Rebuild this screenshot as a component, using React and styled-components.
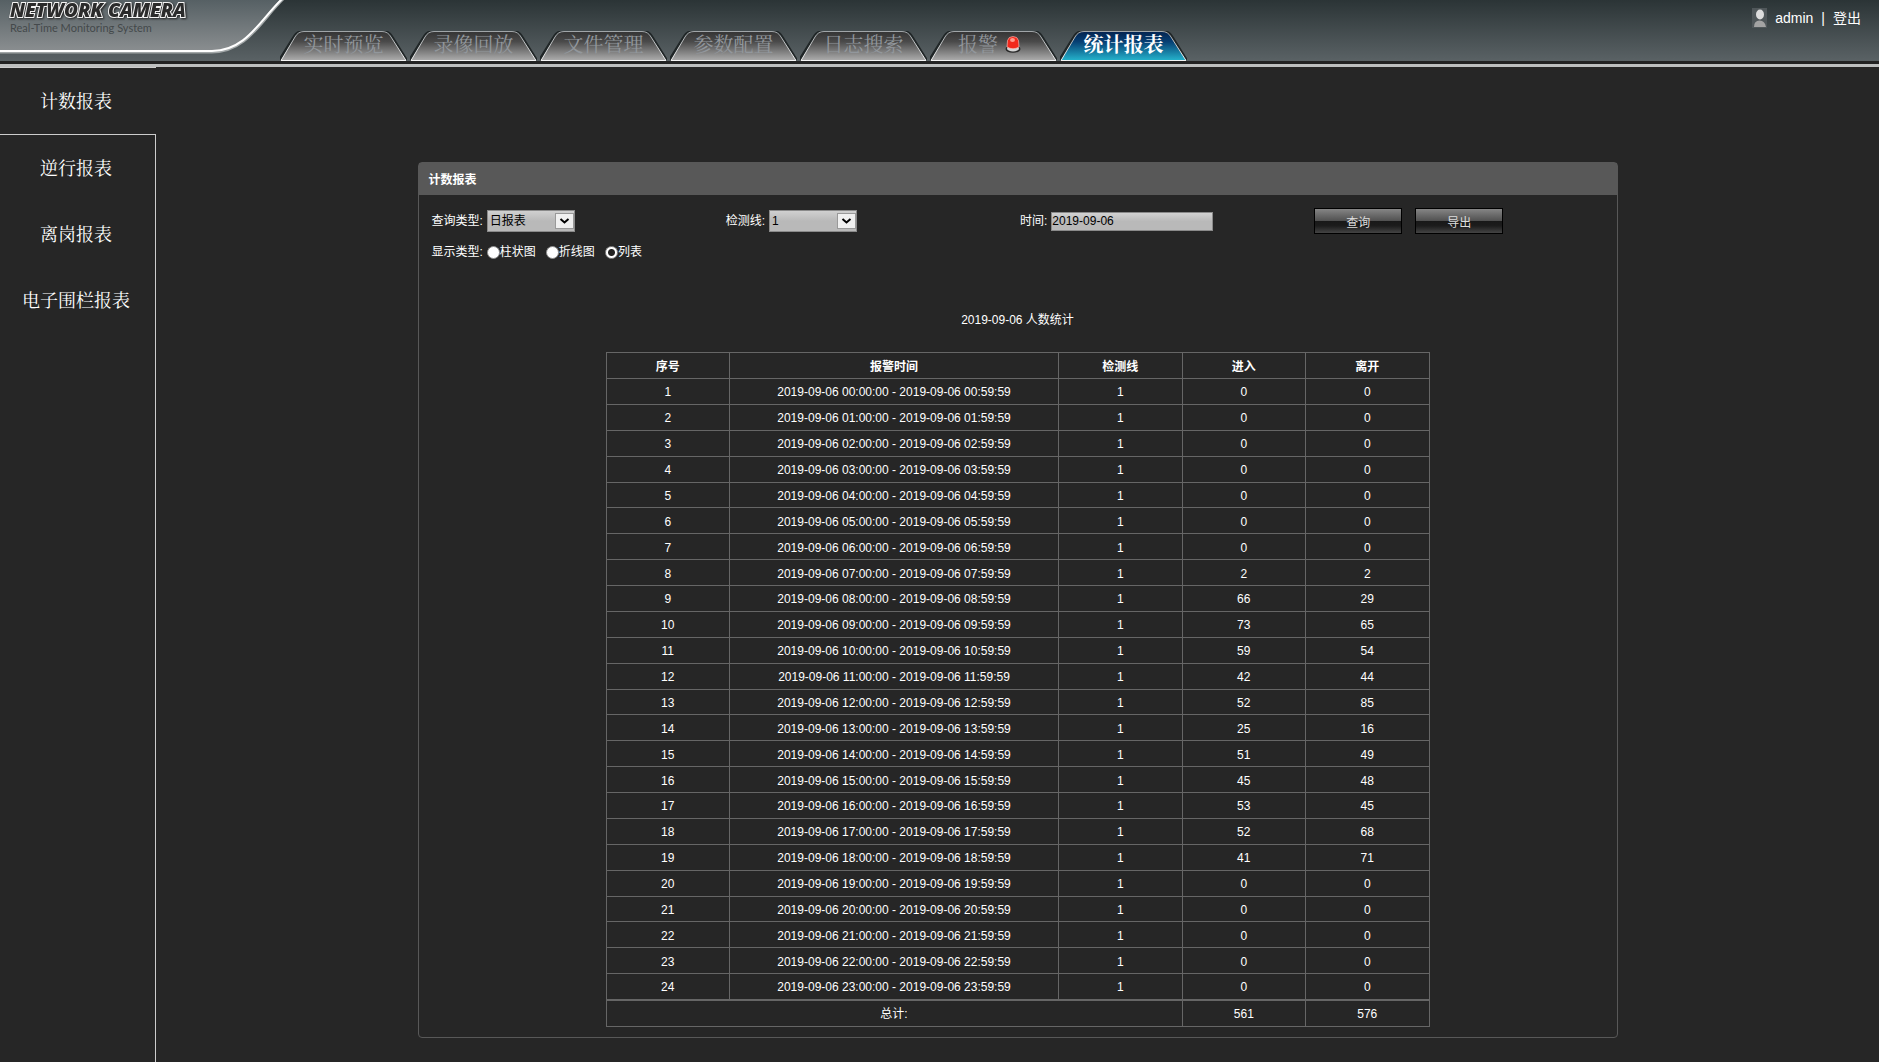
import React, { useState } from "react";
import styled, { createGlobalStyle, css } from "styled-components";

const GlobalStyle = createGlobalStyle`
  * { box-sizing: border-box; }
  body {
    margin: 0;
    background: #262626;
    color: #fff;
    font: 12px/16px "Liberation Sans", "Noto Sans CJK SC", sans-serif;
  }
  button, input, select { font: inherit; }
`;

const Page = styled.div`
  display: flex;
  flex-direction: column;
  min-height: 100vh;
`;

const Header = styled.header`
  display: flex;
  height: 67px;
  flex: none;
  background: linear-gradient(#2b3436, #5a6265 61px, #222 61px, #222 64px, #bdbfbf 64px);
`;

const Brand = styled.div`
  position: relative;
  width: 280px;
  height: 61px;
  flex: none;
  padding: 0 0 0 10px;
`;

const BrandShape = styled.svg`
  position: absolute;
  left: 0;
  top: 0;
`;

const BrandName = styled.div`
  position: relative;
  font: italic 800 19px/21px "Open Sans", sans-serif;
  color: #2b2b2b;
  white-space: nowrap;
  -webkit-text-stroke: 2px #f4f4f4;
  paint-order: stroke fill;
  filter: drop-shadow(1px 1px 1px #222);
`;

const BrandNote = styled.div`
  position: relative;
  font: 11px/14px Lato, sans-serif;
  color: #44494b;
  white-space: nowrap;
`;

const Tabs = styled.nav`
  display: flex;
  gap: 3px;
  padding-top: 31px;
  height: 61px;
`;

const Tab = styled.a`
  position: relative;
  display: flex;
  justify-content: center;
  width: 127px;
  height: 30px;
  text-decoration: none;
  font-family: "Noto Serif CJK SC", "Noto Sans CJK SC", serif;
  font-size: 20px;
  line-height: 26px;
  font-weight: ${(p) => (p.$active ? 700 : 400)};
  color: ${(p) => (p.$active ? "#fff" : "#92979c")};
`;

const TabShape = styled.svg`
  position: absolute;
  left: 0;
  top: 0;
`;

const TabText = styled.span`
  position: relative;
  display: flex;
  align-items: center;
  gap: 7px;
  height: 26px;
  padding-right: ${(p) => (p.$badge ? 8 : 0)}px;
`;

const User = styled.div`
  display: flex;
  align-items: center;
  gap: 8px;
  height: 36px;
  margin-left: auto;
  padding-right: 18px;
  font-size: 14px;
  white-space: nowrap;
`;

const LogoutLink = styled.a`
  color: #fff;
  text-decoration: none;
`;

const Body = styled.div`
  display: flex;
  flex: 1;
`;

const Sidebar = styled.nav`
  display: flex;
  flex-direction: column;
  width: 156px;
  flex: none;
`;

const SideItem = styled.a`
  display: flex;
  align-items: center;
  justify-content: center;
  height: 66px;
  padding: 0 3px 3px 0;
  border-right: 1px solid #ccc;
  color: #fff;
  text-decoration: none;
  font-family: "Noto Serif CJK SC", "Noto Sans CJK SC", serif;
  font-size: 18px;
  ${(p) =>
    p.$active &&
    css`
      height: 68px;
      padding-right: 4px;
      border: solid #ccc;
      border-width: 1px 0;
    `}
`;

const SideRest = styled.div`
  flex: 1;
  border-right: 1px solid #ccc;
`;

const Main = styled.main`
  flex: 1;
  display: flex;
  justify-content: center;
  align-items: flex-start;
  padding: 95px 24px 24px;
`;

const Panel = styled.section`
  width: 1200px;
  border: 1px solid #585858;
  border-radius: 4px;
`;

const PanelTitle = styled.h1`
  margin: 0;
  padding: 2px 10px 0;
  background: #585858;
  font-size: 12px;
  line-height: 30px;
`;

const Filters = styled.form`
  display: grid;
  grid-template-columns: repeat(4, 1fr);
  align-items: center;
  row-gap: 8px;
  padding: 13px 8px 0 13px;
`;

const Field = styled.div`
  display: flex;
  align-items: center;
  gap: 4px;
`;

const SelectBox = styled.div`
  position: relative;
  display: flex;
`;

const Select = styled.select`
  appearance: none;
  width: 88px;
  height: 22px;
  padding: 0 22px 0 2px;
  border: 1px solid #8a8a8a;
  border-radius: 0;
  background: linear-gradient(#d0d0d0, #b9b9b9 50%);
  color: #000;
`;

const SelectArrow = styled.svg`
  position: absolute;
  right: 1px;
  top: 3px;
  pointer-events: none;
`;

const DateInput = styled.input`
  width: 162px;
  height: 19px;
  padding: 0 0 1px;
  border: 1px solid #8a8a8a;
  background: linear-gradient(#d2d2d2, #b9b9b9 50%);
  color: #000;
`;

const Buttons = styled.div`
  display: flex;
  gap: 13px;
`;

const Button = styled.button`
  width: 88px;
  height: 26px;
  padding: 4px 0 0;
  border: 1px solid #000;
  background: linear-gradient(#858585, #505050 50%, #181818 50%, #1c1c1c 70%, #444);
  color: #ddd;
`;

const RadioField = styled.fieldset`
  grid-column: 1 / -1;
  display: flex;
  align-items: center;
  gap: 10px;
  height: 20px;
  margin: 0;
  padding: 0;
  border: 0;
`;

const RadioLabel = styled.label`
  display: flex;
  align-items: center;
`;

const RadioCaption = styled.span`
  margin-right: -6px;
`;

const Radio = styled.input`
  appearance: none;
  width: 13px;
  height: 13px;
  margin: 0;
  border: 1px solid #8c8c8c;
  border-radius: 50%;
  background: #fff;
  &:checked {
    background: radial-gradient(circle, #222 0 3px, #fff 4px);
  }
`;

const Table = styled.table`
  width: 824px;
  max-width: 100%;
  height: 675px;
  margin: 50px auto 10px;
  border-collapse: collapse;
  table-layout: fixed;
  text-align: center;
`;

const Caption = styled.caption`
  height: 40px;
`;

const cell = css`
  padding: 2px 0 0;
  border: 1px solid #666;
`;

const HeadCell = styled.th`
  ${cell}
  height: 26px;
  width: ${(p) => (p.$wide ? "40%" : "15%")};
`;

const Cell = styled.td`
  ${cell}
  height: 25px;
`;

const Foot = styled.tfoot`
  border-top: 2px solid #666;
  td { height: 27px; }
`;

const tabs = ["实时预览", "录像回放", "文件管理", "参数配置", "日志搜索", "报警", "统计报表"];
const sideItems = ["计数报表", "逆行报表", "离岗报表", "电子围栏报表"];
const displayTypes = ["柱状图", "折线图", "列表"];
const entered = [0, 0, 0, 0, 0, 0, 0, 2, 66, 73, 59, 42, 52, 25, 51, 45, 53, 52, 41, 0, 0, 0, 0, 0];
const left = [0, 0, 0, 0, 0, 0, 0, 2, 29, 65, 54, 44, 85, 16, 49, 48, 45, 68, 71, 0, 0, 0, 0, 0];
const sum = (list) => list.reduce((a, b) => a + b, 0);

function BrandMark() {
  return (
    <BrandShape width="290" height="61" viewBox="0 0 290 61" aria-hidden="true">
      <defs>
        <linearGradient id="brand" x1="0" y1="0" x2="0" y2="1">
          <stop offset="0" stopColor="#566064" />
          <stop offset="1" stopColor="#8a8e90" />
        </linearGradient>
      </defs>
      <path d="M0 0H282C261 20 247 51 212 51H0Z" fill="url(#brand)" />
      <path d="M283 -1C261 20 247 52 212 52H0" fill="none" stroke="#a2a7a8" strokeWidth="3" />
      <path d="M282 -1C260 20 246 51 212 51H0" fill="none" stroke="#fff" strokeWidth="2" />
    </BrandShape>
  );
}

function TabBackground({ active, id }) {
  return (
    <TabShape width="127" height="30" viewBox="0 0 127 30" aria-hidden="true">
      <defs>
        <linearGradient id={id} x1="0" y1="0" x2="0" y2="1">
          <stop offset="0" stopColor={active ? "#04234f" : "#343434"} />
          <stop offset="0.35" stopColor={active ? "#063f73" : "#4a4a4a"} />
          <stop offset="1" stopColor={active ? "#25b3cc" : "#adadad"} />
        </linearGradient>
        <linearGradient id={id + "-edge"} x1="0" y1="0" x2="0" y2="1">
          <stop offset="0" stopColor="#a0a5a8" />
          <stop offset="1" stopColor="#f2f2f2" />
        </linearGradient>
      </defs>
      <path d="M-1 30L14 6Q17 0.5 23 0.5H103Q109 0.5 112 6L127 30" fill="none" stroke="#202627" strokeWidth="3" />
      <path
        d="M1 29.5L15 6Q18 0.5 24 0.5H102Q108 0.5 111 6L126 29.5Z"
        fill={`url(#${id})`}
        stroke={`url(#${id}-edge)`}
      />
    </TabShape>
  );
}

function AlarmIcon() {
  return (
    <svg width="16" height="17" viewBox="0 0 16 17" aria-hidden="true">
      <ellipse cx="8" cy="13" rx="7.5" ry="3.8" fill="#282828" />
      <ellipse cx="8" cy="12.5" rx="6" ry="3" fill="#d5d5d5" />
      <path d="M2 11L2.500 4.500Q3.500 0.500 8 0.500T13.500 4.500L14 11Q8 14.500 2 11Z" fill="#f2281b" stroke="#ffc9c3" strokeWidth="0.6" />
      <ellipse cx="7.500" cy="4" rx="2.500" ry="2" fill="#ff9a8c" />
    </svg>
  );
}

function Avatar() {
  return (
    <svg width="15" height="20" viewBox="0 0 15 20" aria-hidden="true">
      <rect width="15" height="20" fill="#50575a" />
      <path d="M2 19Q2 12.500 7.500 12.500T14 19Z" fill="#a3a3a3" />
      <ellipse cx="8" cy="6.500" rx="4" ry="5" fill="#dcdcdc" />
    </svg>
  );
}

function DropDown({ id, options }) {
  return (
    <SelectBox>
      <Select id={id}>
        {options.map((o) => (
          <option key={o}>{o}</option>
        ))}
      </Select>
      <SelectArrow width="19" height="16" viewBox="0 0 19 16" aria-hidden="true">
        <rect x="0.5" y="0.5" width="18" height="15" fill="#f0f0f0" stroke="#999" />
        <path d="M5.500 6L9.500 9.500L13.500 6" fill="none" stroke="#000" strokeWidth="2" />
      </SelectArrow>
    </SelectBox>
  );
}

export default function App() {
  const [display, setDisplay] = useState("列表");
  const [date, setDate] = useState("2019-09-06");
  return (
    <Page>
      <GlobalStyle />
      <Header>
        <Brand>
          <BrandMark />
          <BrandName>NETWORK CAMERA</BrandName>
          <BrandNote>Real-Time Monitoring System</BrandNote>
        </Brand>
        <Tabs>
          {tabs.map((name, i) => (
            <Tab key={name} href="#" $active={i === 6}>
              <TabBackground id={`tab${i}`} active={i === 6} />
              <TabText $badge={name === "报警"}>
                {name}
                {name === "报警" && <AlarmIcon />}
              </TabText>
            </Tab>
          ))}
        </Tabs>
        <User>
          <Avatar />
          <span>admin</span>
          <span>|</span>
          <LogoutLink href="#">登出</LogoutLink>
        </User>
      </Header>
      <Body>
        <Sidebar>
          {sideItems.map((name, i) => (
            <SideItem key={name} href="#" $active={i === 0}>
              {name}
            </SideItem>
          ))}
          <SideRest />
        </Sidebar>
        <Main>
          <Panel>
            <PanelTitle>计数报表</PanelTitle>
            <Filters onSubmit={(e) => e.preventDefault()}>
              <Field>
                <label htmlFor="type">查询类型:</label>
                <DropDown id="type" options={["日报表"]} />
              </Field>
              <Field>
                <label htmlFor="line">检测线:</label>
                <DropDown id="line" options={["1"]} />
              </Field>
              <Field>
                <label htmlFor="date">时间:</label>
                <DateInput id="date" value={date} onChange={(e) => setDate(e.target.value)} />
              </Field>
              <Buttons>
                <Button type="submit">查询</Button>
                <Button type="button">导出</Button>
              </Buttons>
              <RadioField>
                <RadioCaption>显示类型:</RadioCaption>
                {displayTypes.map((name) => (
                  <RadioLabel key={name}>
                    <Radio type="radio" name="display" checked={display === name} onChange={() => setDisplay(name)} />
                    {name}
                  </RadioLabel>
                ))}
              </RadioField>
            </Filters>
            <Table>
              <Caption>2019-09-06 人数统计</Caption>
              <thead>
                <tr>
                  <HeadCell>序号</HeadCell>
                  <HeadCell $wide>报警时间</HeadCell>
                  <HeadCell>检测线</HeadCell>
                  <HeadCell>进入</HeadCell>
                  <HeadCell>离开</HeadCell>
                </tr>
              </thead>
              <tbody>
                {entered.map((count, i) => {
                  const hour = String(i).padStart(2, "0");
                  return (
                    <tr key={hour}>
                      <Cell>{i + 1}</Cell>
                      <Cell>{`2019-09-06 ${hour}:00:00 - 2019-09-06 ${hour}:59:59`}</Cell>
                      <Cell>1</Cell>
                      <Cell>{count}</Cell>
                      <Cell>{left[i]}</Cell>
                    </tr>
                  );
                })}
              </tbody>
              <Foot>
                <tr>
                  <Cell colSpan={3}>总计:</Cell>
                  <Cell>{sum(entered)}</Cell>
                  <Cell>{sum(left)}</Cell>
                </tr>
              </Foot>
            </Table>
          </Panel>
        </Main>
      </Body>
    </Page>
  );
}
